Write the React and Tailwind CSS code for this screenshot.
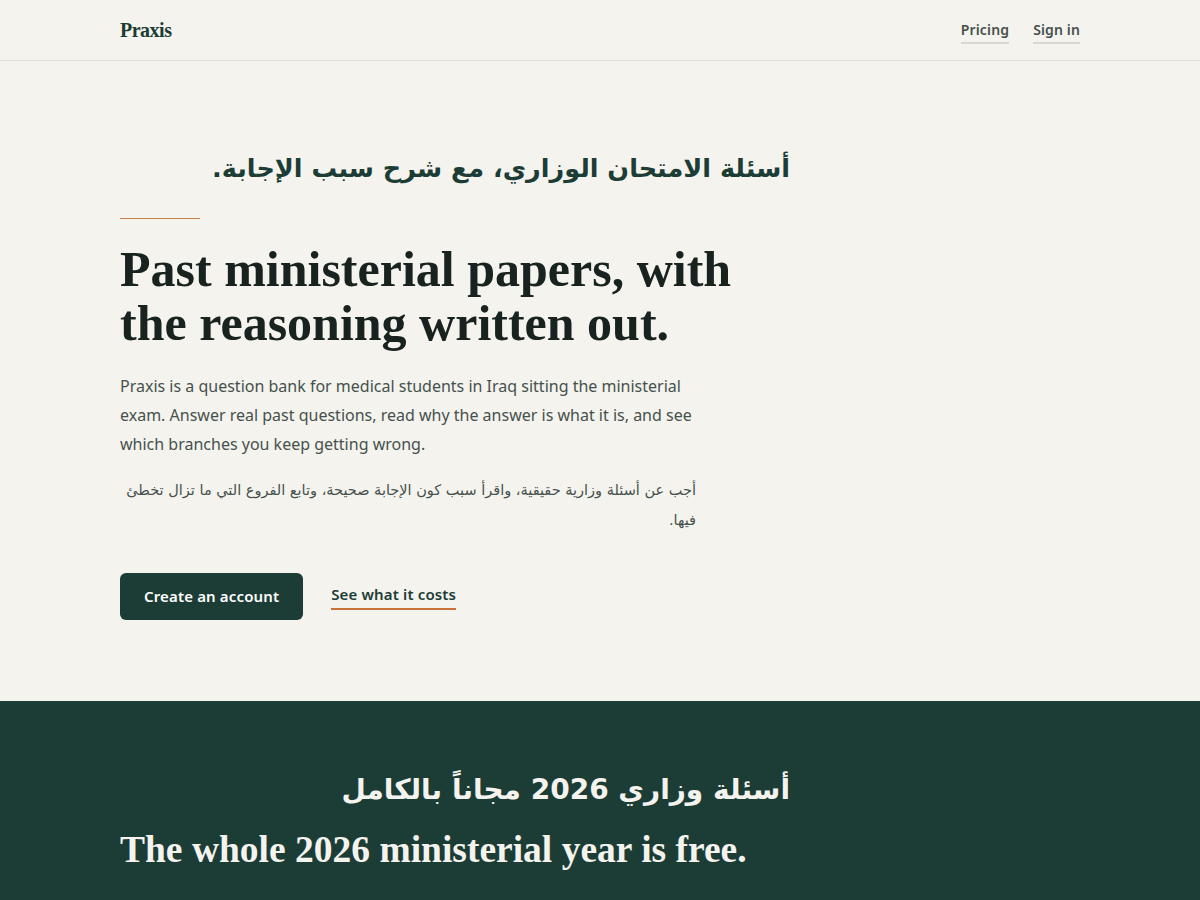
import React from 'react'

const serif = { fontFamily: '"Liberation Serif", "DejaVu Serif", serif' }
const sans = { fontFamily: '"Noto Sans", "DejaVu Sans", sans-serif' }
const arabic = { fontFamily: '"DejaVu Sans", "Noto Sans", sans-serif' }

export default function App() {
    return (
        <div className="min-h-screen bg-[#f4f3ee] text-[#1a2622]" style={sans}>
            {/* Header */}
            <header className="border-b border-[#e2ded5]">
                <div className="max-w-[960px] mx-auto h-[60px] flex items-center justify-between">
                    <span className="text-[20px] font-bold text-[#1c3d36] tracking-tight" style={serif}>Praxis</span>
                    <nav className="flex items-center gap-6 text-[14px] font-semibold text-[#46514d] tracking-[0.01em]">
                        <a className="border-b-2 border-[#dcd7cc] pb-[2px] mt-[2px]">Pricing</a>
                        <a className="border-b-2 border-[#dcd7cc] pb-[2px] mt-[2px]">Sign in</a>
                    </nav>
                </div>
            </header>

            {/* Hero */}
            <section className="pt-[84px] pb-[81px]">
                <div className="max-w-[960px] mx-auto">
                    <h2 dir="rtl" className="max-w-[670px] text-[25.5px] font-bold leading-[46px] whitespace-nowrap text-[#1c3d36]" style={arabic}>
                        أسئلة الامتحان الوزاري، مع شرح سبب الإجابة.
                    </h2>
                    <div className="w-20 h-px bg-[#c8804a] mt-[27px] mb-[24px]" />
                    <h1 className="text-[50px] font-bold leading-[1.07] text-[#18221f] max-w-[650px]" style={serif}>
                        Past ministerial papers, with the reasoning written out.
                    </h1>
                    <p className="mt-[22px] max-w-[580px] text-[16px] leading-[29px] text-[#46514d]">
                        Praxis is a question bank for medical students in Iraq sitting the ministerial exam. Answer real past questions, read why the answer is what it is, and see which branches you keep getting wrong.
                    </p>
                    <p dir="rtl" className="mt-[16px] max-w-[576px] text-[14.5px] leading-[30px] text-[#46514d]" style={arabic}>
                        أجب عن أسئلة وزارية حقيقية، واقرأ سبب كون الإجابة صحيحة، وتابع الفروع التي ما تزال تخطئ فيها.
                    </p>
                    <div className="mt-[38px] flex items-center gap-7">
                        <button className="h-[47px] px-6 rounded-md bg-[#1c3d36] text-white text-[15px] font-semibold tracking-[0.01em]">
                            Create an account
                        </button>
                        <a className="text-[15px] font-semibold text-[#1c3d36] border-b-2 border-[#c8733a] pb-[2px] tracking-[0.01em]">
                            See what it costs
                        </a>
                    </div>
                </div>
            </section>

            {/* Free year */}
            <section className="bg-[#1c3d36] text-[#f4f3ee] pt-[66px] pb-16">
                <div className="max-w-[960px] mx-auto">
                    <h2 dir="rtl" className="max-w-[670px] text-[28px] font-bold leading-[46px] whitespace-nowrap" style={arabic}>
                        أسئلة وزاري 2026 مجاناً بالكامل
                    </h2>
                    <h3 className="mt-[14px] text-[37.5px] font-bold leading-[1.2]" style={serif}>
                        The whole 2026 ministerial year is free.
                    </h3>
                </div>
            </section>
        </div>
    )
}
